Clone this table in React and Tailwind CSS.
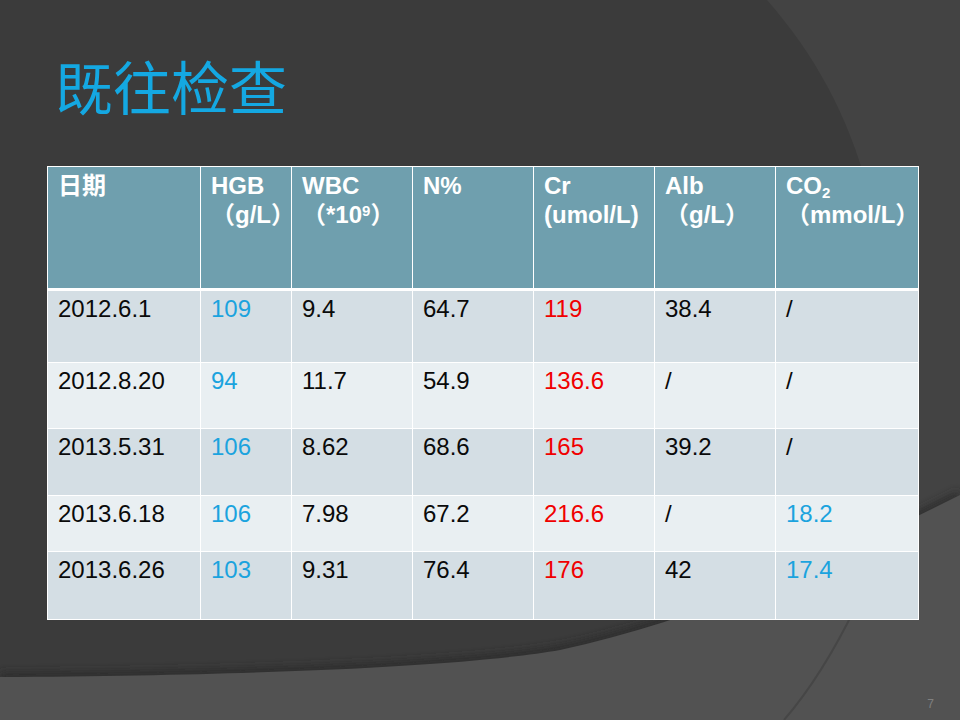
import React from 'react';

const font = { fontFamily: '"Liberation Sans", Arial, "Noto Sans CJK SC", sans-serif' };

const COLS = 'grid grid-cols-[152px_90px_120px_120px_120px_120px_142px] gap-px';

const rows = [
  { h: 'h-[71px]', bg: 'bg-[#d4dee4]', cells: ['2012.6.1', '109', '9.4', '64.7', '119', '38.4', '/'] },
  { h: 'h-[65px]', bg: 'bg-[#e9eff2]', cells: ['2012.8.20', '94', '11.7', '54.9', '136.6', '/', '/'] },
  { h: 'h-[66px]', bg: 'bg-[#d4dee4]', cells: ['2013.5.31', '106', '8.62', '68.6', '165', '39.2', '/'] },
  { h: 'h-[55px]', bg: 'bg-[#e9eff2]', cells: ['2013.6.18', '106', '7.98', '67.2', '216.6', '/', '18.2'] },
  { h: 'h-[67px]', bg: 'bg-[#d4dee4]', cells: ['2013.6.26', '103', '9.31', '76.4', '176', '42', '17.4'] },
];

// colour of a value cell by column; CO2 column is only blue when it has a number
const cellColor = (col, value) => {
  if (col === 1) return 'text-[#1ba3de]';
  if (col === 4) return 'text-[#f00000]';
  if (col === 6 && value !== '/') return 'text-[#1ba3de]';
  return 'text-[#0a0a0a]';
};

const HeaderCell = ({ children }) => (
  <div className="bg-[#6f9fae] h-[121px] pl-[10px] pt-[4px] text-white font-bold text-[24px] leading-[29px] whitespace-nowrap">
    {children}
  </div>
);

const Background = () => (
  <svg className="absolute inset-0" width="960" height="720" viewBox="0 0 960 720">
    <defs>
      <filter id="soft" x="-10%" y="-50%" width="120%" height="200%">
        <feGaussianBlur stdDeviation="4" />
      </filter>
    </defs>
    <rect width="960" height="720" fill="#3b3b3b" />
    <path d="M767 0 C815 55 848 115 868 190 C885 260 900 330 912 420 L915 560 L960 560 L960 0 Z" fill="#434343" />
    <path d="M0 677 C300 675 480 664 560 650 C700 620 830 560 960 495" stroke="#2c2c2c" strokeWidth="8" fill="none" filter="url(#soft)" />
    <path d="M0 677 C300 675 480 664 560 650 C700 620 830 560 960 495 L960 720 L0 720 Z" fill="#525252" />
    <path d="M784 720 Q822 676 856 606" stroke="#464646" strokeWidth="2" fill="none" />
  </svg>
);

export default function App() {
  return (
    <div className="relative w-[960px] h-[720px] overflow-hidden bg-[#3b3b3b]" style={font}>
      <Background />
      <div className="relative flex flex-col">
        <h1
          className="pl-[55px] pt-[56px] text-[58px] leading-none font-normal text-[#14a8e2]"
          style={{ fontFamily: '"Noto Sans CJK SC", sans-serif' }}
        >
          既往检查
        </h1>

        <div className="ml-[47px] mt-[52px] w-[872px] bg-white p-px flex flex-col gap-px">
          <div className={`${COLS} mb-[2px]`}>
            <HeaderCell>日期</HeaderCell>
            <HeaderCell>
              HGB<br />（g/L）
            </HeaderCell>
            <HeaderCell>
              WBC<br />（*10<sup className="text-[15px]">9</sup>）
            </HeaderCell>
            <HeaderCell>N%</HeaderCell>
            <HeaderCell>
              Cr<br />(umol/L)
            </HeaderCell>
            <HeaderCell>
              Alb<br />（g/L）
            </HeaderCell>
            <HeaderCell>
              CO<sub className="text-[15px]">2</sub><br />（mmol/L）
            </HeaderCell>
          </div>

          {rows.map((row, i) => (
            <div key={i} className={COLS}>
              {row.cells.map((value, col) => (
                <div
                  key={col}
                  className={`${row.bg} ${row.h} pl-[10px] pt-[3px] text-[24px] leading-[29px] whitespace-nowrap ${cellColor(col, value)}`}
                >
                  {value}
                </div>
              ))}
            </div>
          ))}
        </div>

        <div className="flex justify-end pr-[26px] mt-[78px]">
          <span className="text-[12px] leading-none text-[#808080]">7</span>
        </div>
      </div>
    </div>
  );
}
